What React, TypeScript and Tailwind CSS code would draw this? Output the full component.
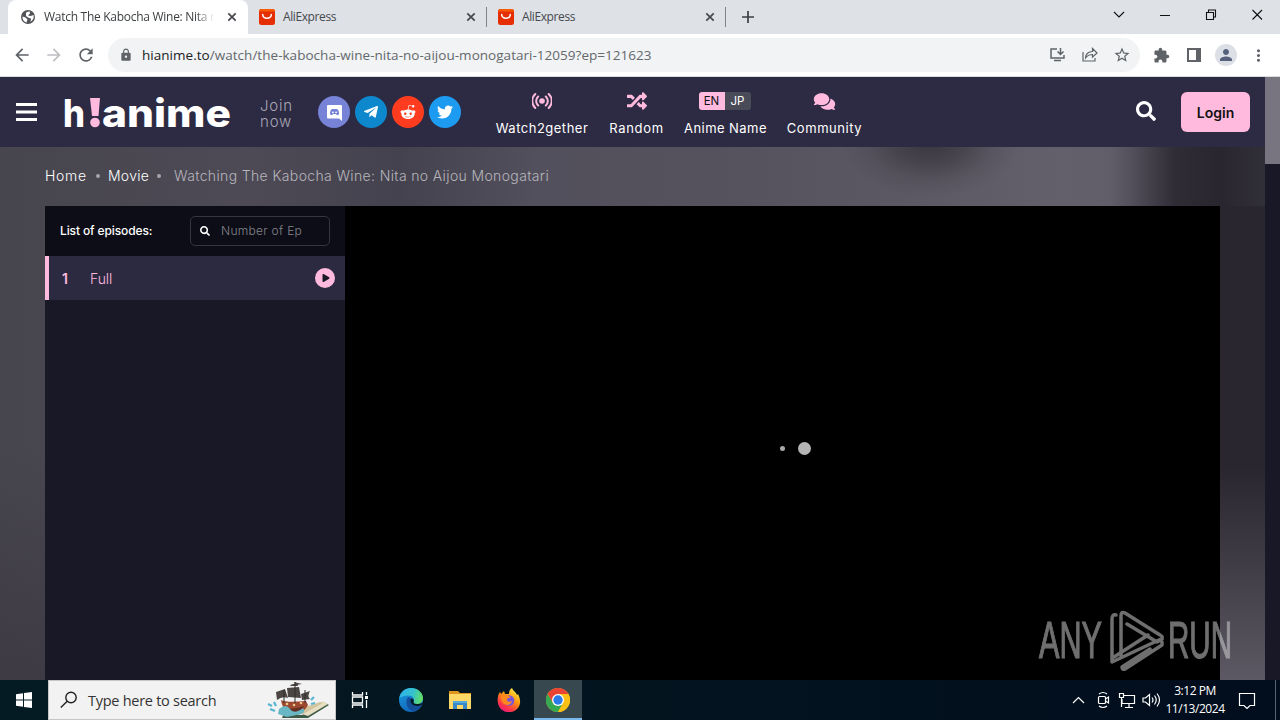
import React from "react";
import { FaTelegramPlane, FaRedditAlien, FaTwitter, FaRandom, FaComments, FaSearch, FaPlay } from "react-icons/fa";
import { MdArrowBack, MdArrowForward, MdRefresh, MdLock, MdStarBorder, MdExtension, MdPerson, MdMoreVert } from "react-icons/md";

const AliIcon = () => (
  <svg width="16" height="16" viewBox="0 0 16 16" className="shrink-0">
    <rect width="16" height="16" rx="2.5" fill="#e62e04" />
    <path d="M0 2.500A2.500 2.500 0 0 1 2.500 0H13.500A2.500 2.500 0 0 1 16 2.500Z" fill="#f85a05" />
    <path d="M3.700 5.500C4 10.500 12 10.500 12.300 5.500" fill="none" stroke="#fff" strokeWidth="1.500" strokeLinecap="round" />
  </svg>
);

const CloseIcon = ({ className }: { className: string }) => (
  <svg width="14" height="14" viewBox="0 0 14 14" className={`shrink-0 ${className}`} fill="none" stroke="#45494d" strokeWidth="1.700">
    <path d="m3.300 3.300 7.400 7.400M10.700 3.300l-7.400 7.400" />
  </svg>
);

function Tab() {
  return (
    <div className="flex h-[34px] w-[239px] items-center pl-[11px]">
      <AliIcon />
      <span className="ml-2 flex-1 text-[12px] tracking-[-0.4px] text-[#45494d]">AliExpress</span>
      <CloseIcon className="mr-2" />
      <div className="h-5 w-px bg-[#808388]" />
    </div>
  );
}

function TabStrip() {
  return (
    <div className="flex h-[34px] bg-[#dee1e6]">
      <div className="ml-2 flex h-[34px] w-[240px] items-center rounded-t-lg bg-white pl-3">
        <svg width="16" height="16" viewBox="0 0 16 16" className="shrink-0">
          <circle cx="8" cy="8" r="7" fill="#505357" />
          <path d="M2.500 7.500 5.500 8.500 7.500 10.500 6.500 13.500C4 12.800 2.300 10.800 2.500 7.500ZM6 3.500 9.500 2.200 10 4.500 8 6.500 10.500 7 13.600 6C14.200 9 13 11.500 10.500 12.800L11 9.500 8.500 8.800 6 7Z" fill="#fff" />
        </svg>
        <span className="ml-2 w-[172px] overflow-hidden whitespace-nowrap text-[12px] tracking-[-0.28px] text-[#3c4043] [mask-image:linear-gradient(to_right,black_88%,transparent_99%)]">
          Watch The Kabocha Wine: Nita no Aijou
        </span>
        <CloseIcon className="ml-[9px]" />
      </div>
      <Tab />
      <Tab />
      <svg width="14" height="14" viewBox="0 0 14 14" className="ml-[15px] mt-[10px]" fill="none" stroke="#3c4043" strokeWidth="1.700"><path d="M7 1v12M1 7h12" /></svg>
      <div className="ml-auto flex h-[29px] items-center">
        <svg width="170" height="20" viewBox="0 0 170 20" fill="none" stroke="#111" strokeWidth="1.100">
          <path d="m4 7 5 5 5-5M50 10.500h10M96.500 7.500h7v7h-7zM98.500 7v-2h7v7h-2M142.500 5l9.500 9.500M152 5l-9.500 9.500" />
        </svg>
      </div>
    </div>
  );
}

function Toolbar() {
  return (
    <div className="flex h-[43px] items-center border-b border-[#dadce0] bg-white text-[#5f6368]">
      <MdArrowBack className="ml-3 size-5" />
      <MdArrowForward className="ml-3 size-5 text-[#bdbfc2]" />
      <MdRefresh className="ml-3 size-5" />
      <div className="ml-3 flex h-[34px] w-[1032px] items-center rounded-full bg-[#f1f3f4]">
        <MdLock className="ml-[11px] size-[14px]" />
        <span className="ml-[9px] whitespace-nowrap text-[13.5px] tracking-[0.03px] text-[#64686d]">
          <span className="text-[#202124]">hianime.to</span>/watch/the-kabocha-wine-nita-no-aijou-monogatari-12059?ep=121623
        </span>
        <svg width="50" height="18" viewBox="0 0 50 18" className="ml-auto" fill="none" stroke="#5f6368" strokeWidth="1.500">
          <path d="M8 3H2v9h13v-3M11.500 2v6M8.500 5.500l3 3 3-3M5 14.500h7" />
          <path d="M34 6v9h12v-3M36.500 12c0-4 3-6.500 7-6.500V2.500L48 7l-4.500 4.200V8.500c-3 0-5 1-7 3.500Z" strokeWidth="1.200" />
        </svg>
        <MdStarBorder className="ml-[14px] mr-[9px] size-[18px]" />
      </div>
      <MdExtension className="ml-[13px] size-[17px]" />
      <svg width="14" height="14" viewBox="0 0 14 14" className="ml-[17px]"><path d="M0 0h14v14H0zM2 2v10h7V2z" fill="#5f6368" fillRule="evenodd" /></svg>
      <div className="ml-[14px] flex size-[22px] items-center justify-center rounded-full bg-[#dcdfe6]">
        <MdPerson className="size-[18px] text-[#56607c]" />
      </div>
      <MdMoreVert className="ml-3 size-[19px]" />
    </div>
  );
}

const Social = ({ className, children }: { className: string; children: React.ReactNode }) => (
  <div className={`flex size-8 items-center justify-center rounded-full text-white ${className}`}>{children}</div>
);

const NavItem = ({ className, icon, label }: { className: string; icon: React.ReactNode; label: React.ReactNode }) => (
  <div className={`flex flex-col items-center whitespace-nowrap text-[13px] text-white ${className}`}>
    <div className="flex h-[18px] items-center text-[#ffbade]">{icon}</div>
    <div className="mt-[8px] leading-[20px]">{label}</div>
  </div>
);

function Header() {
  return (
    <header className="flex h-[70px] bg-[#2d2a43] font-['Inter',sans-serif]">
      <svg width="21" height="18" viewBox="0 0 21 18" className="ml-4 mt-[26px]" fill="#fff"><path d="M0 0h21v3H0zM0 7.500h21v3H0zM0 15h21v3H0z" /></svg>
      <svg width="178" height="60" viewBox="-3 -5 178 60" className="ml-[22px] mt-[10px]" fontFamily="Inter, sans-serif" fontWeight="800" fontSize="38" fill="#fff">
        <text x="1" y="35" textLength="22" lengthAdjust="spacingAndGlyphs">h</text>
        <path d="M28 6h10l-1.500 18h-6.500z" fill="#ffbade" />
        <circle cx="33" cy="30.500" r="4.800" fill="#ffbade" />
        <text x="40" y="35" textLength="129" lengthAdjust="spacingAndGlyphs">anime</text>
      </svg>
      <div className="ml-[23px] mt-[21px] w-[58px] text-[15px] font-light leading-4 tracking-[0.8px] text-[#a9a8b6]">Join<br />now</div>
      <div className="mt-[19px] flex gap-[5px]">
        <Social className="bg-[#7683d6]">
          <svg width="15" height="17" viewBox="0 0 15 17"><path d="M1 1h13q1 0 1 1V17l-3-2.500H1Q0 14.500 0 13.500V2Q0 1 1 1Z" fill="#fff" /><path d="M3 10.500c0-4 1-5.500 3-5.500h3c2 0 3 1.500 3 5.500l-2 .8-1-1.300H6l-1 1.300Z" fill="#7683d6" /><circle cx="5.900" cy="8.300" r=".9" fill="#fff" /><circle cx="9.100" cy="8.300" r=".9" fill="#fff" /></svg>
        </Social>
        <Social className="bg-[#0d88cc]"><FaTelegramPlane className="size-[16px]" /></Social>
        <Social className="bg-[#ff3c1f]"><FaRedditAlien className="size-[16px]" /></Social>
        <Social className="bg-[#1d9bf0]"><FaTwitter className="size-[16px]" /></Social>
      </div>
      <div className="mt-[15px] flex">
        <NavItem className="ml-[35px] w-[92px]" label={<span className="tracking-[0.5px]">Watch2gether</span>} icon={
          <svg width="20" height="18" viewBox="0 0 20 18" fill="none" stroke="currentColor" strokeWidth="2" strokeLinecap="round"><circle cx="10" cy="9" r="2.800" fill="currentColor" stroke="none" /><path d="M6.200 4.500a6 6 0 0 0 0 9M13.800 4.500a6 6 0 0 1 0 9M3.300 2a9.500 9.500 0 0 0 0 14M16.700 2a9.500 9.500 0 0 1 0 14" /></svg>
        } />
        <NavItem className="ml-[21px] w-[55px]" label={<span className="tracking-[0.7px]">Random</span>} icon={<FaRandom className="size-5" />} />
        <NavItem className="ml-5 w-[83px]" label={<span className="tracking-[0.45px]">Anime Name</span>} icon={
          <div className="mr-[2px] flex h-[18px] overflow-hidden rounded-[3px] text-[11.5px] leading-[18px]"><span className="w-[26px] bg-[#ffbade] text-center text-[#111]">EN</span><span className="w-[26px] bg-[#4a4b58] text-center text-white">JP</span></div>
        } />
        <NavItem className="ml-5 w-[75px]" label={<span className="tracking-[0.55px]">Community</span>} icon={<FaComments className="h-[19px] w-[23px]" />} />
      </div>
      <FaSearch className="ml-auto mt-[24px] size-5 text-white" />
      <div className="ml-[25px] mr-[15px] mt-[15px] flex h-10 w-[69px] items-center justify-center rounded-md bg-[#ffbade] text-[14px] font-semibold text-[#111]">Login</div>
    </header>
  );
}

function Watermark() {
  return (
    <svg width="210" height="80" viewBox="0 -8 210 80" className="absolute left-[1038px] top-[523px] opacity-50" fill="#ddd" fontFamily="Liberation Sans, sans-serif" fontSize="52">
      <text x="1" y="50" textLength="63" lengthAdjust="spacingAndGlyphs" stroke="#ddd" strokeWidth="1.200">ANY</text>
      <text x="130" y="50" textLength="64" lengthAdjust="spacingAndGlyphs" stroke="#ddd" strokeWidth="1.200">RUN</text>
      <g fill="none" stroke="#ddd" strokeWidth="3.500" strokeLinejoin="round" strokeLinecap="round">
        <path d="M78 7q-4-1-4 4v43l49-23q3-2-1-4L87 5q-4-2-4 3v40" />
        <path d="m89 16 30 18 5-3M110 27 76 49M124 34v3L87 61q-3 1-3-2l28-18" />
      </g>
    </svg>
  );
}

function Page() {
  return (
    <div className="relative flex h-[603px] overflow-hidden bg-[#191826]">
      <div className="w-[1265px]">
        <Header />
        <div className="h-[533px] bg-[radial-gradient(ellipse_90px_55px_at_930px_-5px,#393640_0%,#39364099_40%,#39364033_70%,transparent_100%),linear-gradient(to_bottom,transparent_300px,#34303b80_530px),linear-gradient(to_right,#47454d_0px,#4d4a56_250px,#44424e_400px,#53505d_540px,#55525d_720px,#5c5863_900px,#64606b_1060px,#625e69_1110px,#55515c_1130px,#302c36_1175px,#29262f_1220px,#312f38_1265px)] font-['Inter',sans-serif]">
          <div className="flex h-[59px] items-center pb-[2px] pl-[45px] text-[14px] font-light text-white">
            <span className="w-[42px] tracking-[0.7px]">Home</span>
            <i className="ml-[9px] mr-2 size-1 rounded-full bg-[#a5a4a9]" />
            <span className="w-[41px] tracking-[0.25px]">Movie</span>
            <i className="ml-[8px] mr-[13px] size-1 rounded-full bg-[#a5a4a9]" />
            <span className="whitespace-nowrap tracking-[0.36px] text-[#b7b6bc]">Watching The Kabocha Wine: Nita no Aijou Monogatari</span>
          </div>
          <div className="flex h-[474px]">
            <aside className="ml-[45px] w-[300px] bg-[#191826]">
              <div className="flex h-[50px] items-center justify-between bg-[#0c0d16] px-[15px] text-[12px]">
                <span className="font-medium tracking-[-0.12px] text-white">List of episodes:</span>
                <div className="flex h-[30px] w-[140px] items-center rounded-[5px] border border-[#34353f] pl-[9px] text-[#85858c]">
                  <FaSearch className="mr-[11px] size-[10px] text-white" />
                  <span className="font-light tracking-[0.3px]">Number of Ep</span>
                </div>
              </div>
              <div className="flex h-[44px] items-center border-l-4 border-[#ffbade] bg-[#2c2a41] pl-[13px] text-[14px] text-[#ffbade]">
                <span className="w-[28px] font-semibold">1</span>
                <span className="flex-1 font-light tracking-[-0.1px]">Full</span>
                <div className="mr-[10px] flex size-5 items-center justify-center rounded-full bg-[#ffbade] pl-[2px] text-[#191826]"><FaPlay className="size-[8px]" /></div>
              </div>
            </aside>
            <div className="flex w-[875px] items-center justify-center bg-black pl-[26px] pt-[11px]">
              <i className="mr-[13px] size-[5px] rounded-full bg-[#aaa]" />
              <i className="size-[13px] rounded-full bg-[#b5b5b5]" />
            </div>
            <div className="w-[45px] bg-linear-to-b from-[#29262f] from-55% to-[#5c5964]" />
          </div>
        </div>
      </div>
      <div className="w-[15px]"><div className="h-[87px] bg-[#787580]" /></div>
      <Watermark />
    </div>
  );
}

function Ship() {
  return (
    <svg width="64" height="37" viewBox="0 0 64 37">
      <path d="m17 31 18 2 22-13 5 3-21 13H15Z" fill="#3e5b47" />
      <path d="m35 32 21-13 5 3-20 12Z" fill="#e8dfc3" /><path d="m18 29 20-4 15-5 3 1-20 11Z" fill="#d2c49d" />
      <path d="M14 18q5 3 25 1l2 4q-3 6-8 7H21q-6-4-7-12Z" fill="#9d4930" />
      <path d="M16 25q7 4 21-1-3 6-9 6H18Z" fill="#642f24" />
      <path d="m9 10 9-3 3 9q-6-2-11 2ZM20 6l12-1 2 11-13-1ZM34 12l9-3q-3 5 0 8l-8 1ZM23 3l7-2 1 3h-7ZM27 0l8 2-6 1Z" fill="#4b4543" />
      <path d="M28 0v21M17 8v13M38 8v13" stroke="#302e2d" />
      <path d="M12 27q7-6 11 0t13-1q3 4-2 6l-14 3-9-3Z" fill="#69b6c4" />
      <path d="m1 22 4 2M3 27l5 2M7 20l2 4M44 18l3-3M44 22l4-1" stroke="#58b5d2" strokeWidth="2.200" />
      <circle cx="20" cy="22" r="1.300" fill="#e9c88e" /><circle cx="27" cy="23" r="1.300" fill="#e9c88e" /><circle cx="34" cy="21" r="1.300" fill="#e9c88e" />
    </svg>
  );
}

function Edge() {
  return (
    <svg width="24" height="24" viewBox="0 0 24 24">
      <defs>
        <linearGradient id="eg" x1="0" y1=".3" x2="1" y2=".5"><stop stopColor="#2fb4e8" /><stop offset=".55" stopColor="#35c1cf" /><stop offset="1" stopColor="#62df62" /></linearGradient>
        <linearGradient id="eb" x1="0" y1="0" x2=".5" y2="1"><stop stopColor="#1b9de2" /><stop offset="1" stopColor="#1266b8" /></linearGradient>
      </defs>
      <circle cx="12" cy="12" r="12" fill="url(#eb)" />
      <path d="M.3 10C1.500 4 6 0 12 0c7 0 12 5 12 10 0 4-3 6-6 6-4 0-4-1.500-3.300-2.600C16 11 14 7.500 9.500 7.500 5 7.500 1.500 9 .3 10Z" fill="url(#eg)" />
      <path d="M9.500 9c-3 2-3.500 10 3.500 14 4 0 8-3 9.800-6-5 2.500-10 .5-11-3-.6-2 .3-3.500.3-3.500Z" fill="#144d98" />
      <path d="M12 10.500c-2 4 2 8 7 7.500 2-.2 4-1 5-2.500v-1c-2 1.500-4 1.500-6 1.500-3 0-4-1.500-3.300-2.600.6-1-.7-3-2.700-2.900Z" fill="#041a23" />
    </svg>
  );
}

function Firefox() {
  return (
    <svg width="24" height="24" viewBox="0 0 24 24">
      <defs><linearGradient id="ff" x1=".8" y1="0" x2=".2" y2="1"><stop stopColor="#fff44f" /><stop offset=".4" stopColor="#ff980e" /><stop offset=".75" stopColor="#ff3647" /><stop offset="1" stopColor="#e31587" /></linearGradient></defs>
      <path d="M1 9c0-2 1-4 2-5l1 2 3-3 1 3h4c0-3 1-5 3-6 1 3 4 4 5 7l1-1c3 6 3 11-1 15-5 5-13 4-17-1C1 17 0 13 1 9Z" fill="url(#ff)" />
      <circle cx="12" cy="12.500" r="5.300" fill="#7653dc" />
      <path d="M4 8q4-3 8 0l2 2q-4-1-4 2 0 3 5 1-2 6-8 3-3-2-3-8Z" fill="#ff891d" />
    </svg>
  );
}

function Chrome() {
  return (
    <svg width="24" height="24" viewBox="0 0 24 24">
      <circle cx="12" cy="12" r="12" fill="#fbc016" />
      <path d="M1.600 6A12 12 0 0 1 22.400 6H12L6.800 15Z" fill="#ea4335" />
      <path d="M1.600 6a12 12 0 0 0 10.400 18l5.200-9-10.400 0Z" fill="#34a853" />
      <path d="M22.400 6A12 12 0 0 1 12 24l5.200-9L12 6Z" fill="#fbc016" />
      <circle cx="12" cy="12" r="6" fill="#fff" /><circle cx="12" cy="12" r="4.700" fill="#287be9" />
    </svg>
  );
}

function Taskbar() {
  return (
    <footer className="flex h-10 bg-linear-to-r from-[#041b24] via-[#03141f] to-[#020d1d] text-white">
      <div className="flex w-12 items-center justify-center">
        <svg width="16" height="16" viewBox="0 0 16 16" fill="#fff"><path d="M0 2.200 7 1.200v6.300H0zM8 1.100 16 0v7.500H8zM0 8.500h7v6.300l-7-1zM8 8.500h8V16l-8-1.100z" /></svg>
      </div>
      <div className="flex h-10 w-[288px] items-center border border-[#c6c6c6] bg-[#f2f2f2] pl-[11px]">
        <svg width="18" height="18" viewBox="0 0 18 18" fill="none" stroke="#222" strokeWidth="1.400"><circle cx="11" cy="6.500" r="5.200" /><path d="M7.200 10.200.8 16.500" /></svg>
        <span className="ml-[10px] flex-1 pt-[2px] text-[14.5px] tracking-[-0.27px] text-[#333]">Type here to search</span>
        <div className="mr-[4px]"><Ship /></div>
      </div>
      <div className="flex w-12 items-center justify-center">
        <svg width="18" height="18" viewBox="0 0 18 18" fill="none" stroke="#fff" strokeWidth="1.300"><path d="M1.500 1v3h10V1M1.500 17v-3h10v3M1.500 6h10v6h-10zM15.500 1v3M15.500 9v8" /><path d="M14 5h3v3h-3z" fill="#fff" stroke="none" /></svg>
      </div>
      <div className="ml-[15px] flex items-center"><Edge /></div>
      <div className="ml-[26px] flex items-center">
        <svg width="22" height="20" viewBox="0 0 22 20"><path d="M0 1h9l2 2h11v4H0z" fill="#dd971c" /><path d="M0 4h22v15H0z" fill="#ffd968" /><path d="M4 19v-8h14v8h-4v-4H8v4z" fill="#3989c7" /><path d="M4 11h14v2H4z" fill="#5aa9dd" /></svg>
      </div>
      <div className="ml-[26px] flex items-center"><Firefox /></div>
      <div className="ml-[13px] flex h-10 w-12 items-center justify-center border-b-2 border-[#79b8ed] bg-[#38484f] pt-[2px]"><Chrome /></div>
      <div className="ml-auto flex items-center">
        <svg width="92" height="20" viewBox="0 0 92 20" fill="none" stroke="#fff" strokeWidth="1.200">
          <path d="m3 13 5.500-5.500L14 13" />
          <rect x="28.500" y="6.500" width="7" height="7" rx="1" /><path d="m35.500 9 3-2v6l-3-2M29 4q4-3 8 0M29 16q4 3 8 0" />
          <path d="M54 5.500h10.500v8H52V9M59 14v3M55 17.500h8M49.500 3.500h4v4h-4zM51.500 8v9" />
          <path d="M73 8h2.500l4-3.500v11l-4-3.500H73zM82 7.500q2 2.500 0 5M84.500 5.500q3.500 4.500 0 9M87 3.500q5 6.500 0 13" />
        </svg>
        <div className="ml-[3px] w-[60px] whitespace-nowrap text-center text-[12px] leading-[18px] tracking-[-0.45px]">3:12 PM<br />11/13/2024</div>
        <svg width="18" height="18" viewBox="0 0 18 18" className="ml-[13px]" fill="none" stroke="#fff" strokeWidth="1.200"><path d="M1.500 2.500h15v12H12l-3 3-3-3H1.500z" /></svg>
        <div className="ml-[19px] mr-1 h-10 w-px bg-[#59636d]" />
      </div>
    </footer>
  );
}

export default function App() {
  return (
    <div className="h-[720px] w-[1280px] overflow-hidden font-['Open_Sans','Noto_Sans',sans-serif]">
      <TabStrip />
      <Toolbar />
      <Page />
      <Taskbar />
    </div>
  );
}
